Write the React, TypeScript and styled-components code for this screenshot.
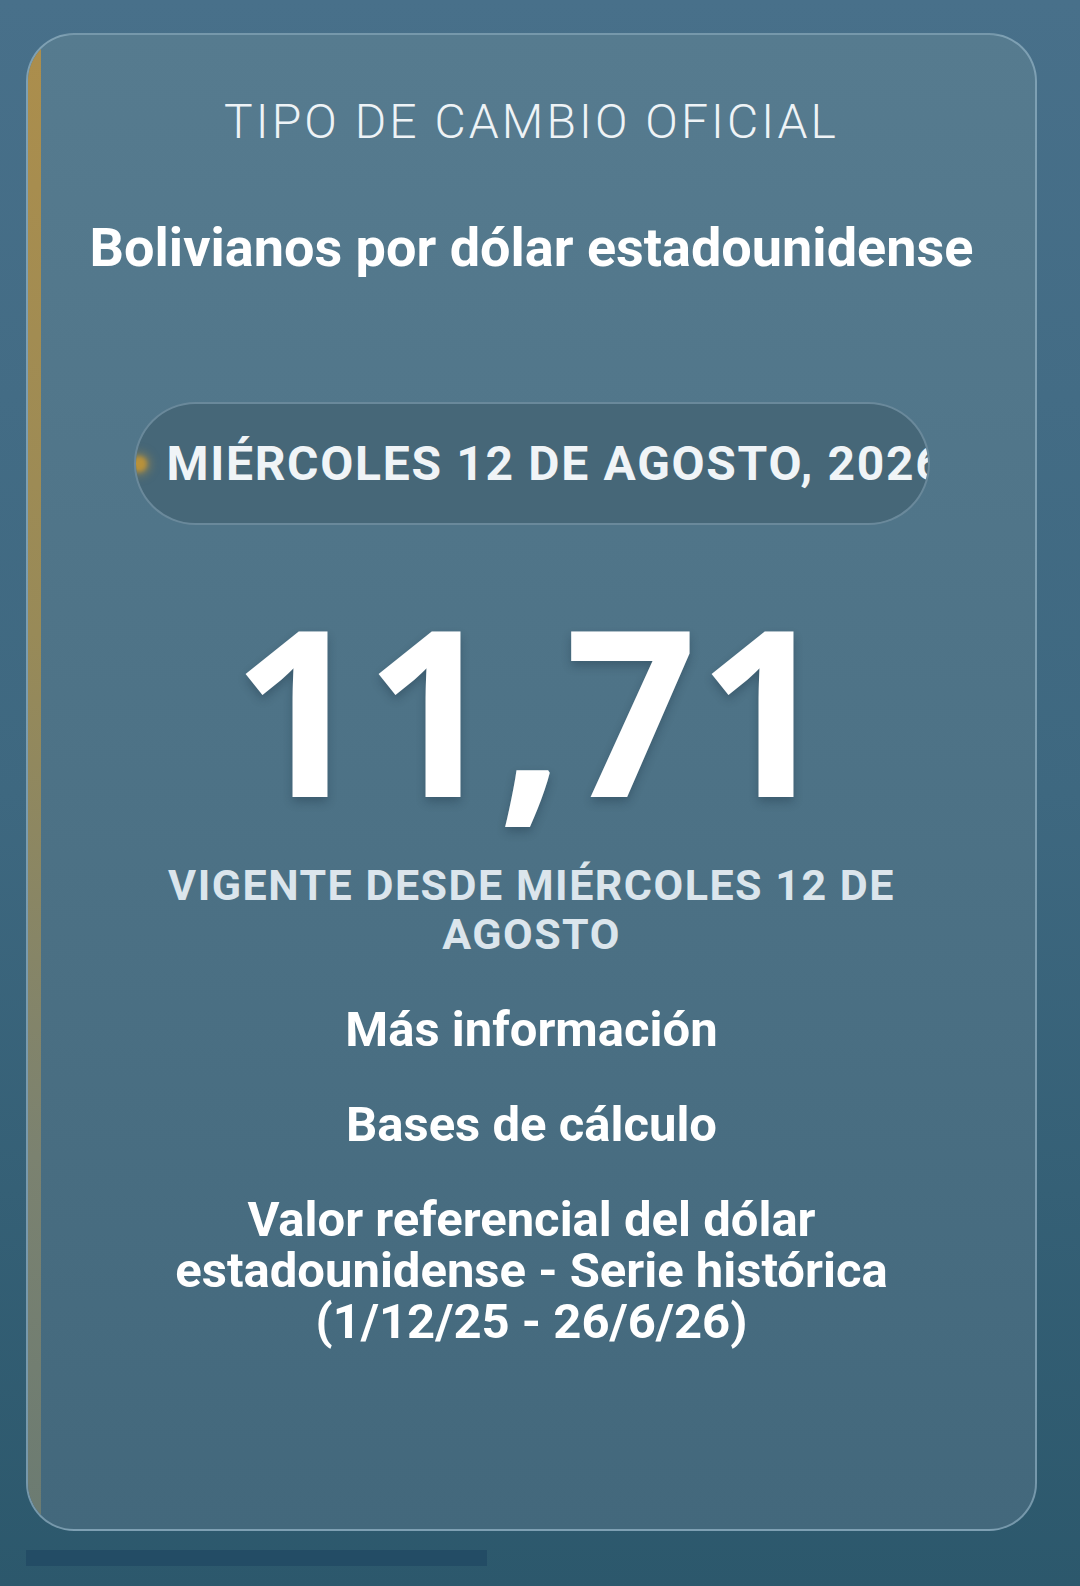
import React from "react";
import styled, { createGlobalStyle } from "styled-components";

const GlobalStyle = createGlobalStyle`
  html, body {
    margin: 0;
    padding: 0;
  }
  body {
    min-height: 1586px;
    background: linear-gradient(180deg, #48708a 0%, #3e6880 50%, #2c586c 100%);
    font-family: Roboto, "Noto Sans", "Liberation Sans", sans-serif;
    -webkit-font-smoothing: antialiased;
  }
  * { box-sizing: border-box; }
`;

const Page = styled.main`
  display: flex;
  flex-direction: column;
  align-items: flex-start;
  padding: 33px 0 0 26px;
`;

const Card = styled.section`
  position: relative;
  width: 1011px;
  display: flex;
  flex-direction: column;
  align-items: center;
  padding: 58px 30px 182px;
  border: 2px solid rgba(160, 192, 210, 0.55);
  border-radius: 48px;
  overflow: hidden;
  background: linear-gradient(180deg, #567b8f 0%, #4c7185 55%, #43687c 100%);

  /* gold accent running down the left edge */
  &::before {
    content: "";
    position: absolute;
    left: 0;
    top: 0;
    bottom: 0;
    width: 13px;
    background: linear-gradient(180deg, #ac8e4c 0%, #988a58 40%, #7b8270 75%, #6b7b72 100%);
  }
`;

const Kicker = styled.h2`
  margin: 0;
  font-weight: 300;
  font-size: 48px;
  line-height: 58px;
  letter-spacing: 3.1px;
  color: #eef3f6;
  text-transform: uppercase;
`;

const Title = styled.h1`
  margin: 68px 0 0;
  font-weight: 700;
  font-size: 54px;
  line-height: 58px;
  white-space: nowrap;
  color: #ffffff;
`;

/* the date chip is narrower than its label, so the year runs past the rounded end */
const DatePill = styled.div`
  margin-top: 125px;
  width: 796px;
  height: 123px;
  flex: none;
  display: flex;
  align-items: center;
  gap: 20px;
  border: 2px solid rgba(150, 180, 198, 0.45);
  border-radius: 62px;
  background: #466778;
  overflow: hidden;
`;

const LiveDot = styled.span`
  flex: none;
  width: 16px;
  height: 16px;
  margin-left: -5px;
  border-radius: 50%;
  background: #b8913a;
  box-shadow: 0 0 8px 3px rgba(196, 152, 58, 0.5);
  filter: blur(2px);
`;

const DateText = styled.span`
  flex: none;
  white-space: nowrap;
  font-weight: 700;
  font-size: 48px;
  letter-spacing: 1.7px;
  color: #f0f4f7;
`;

const Rate = styled.div`
  margin-top: 67px;
  font-family: "Open Sans", "Noto Sans", sans-serif;
  font-weight: 700;
  font-size: 231px;
  line-height: 231px;
  letter-spacing: 1px;
  color: #ffffff;
  text-shadow: 0 5px 10px rgba(20, 40, 55, 0.3);
`;

const Validity = styled.p`
  margin: 38px 0 0;
  max-width: 820px;
  text-align: center;
  font-weight: 700;
  font-size: 43px;
  line-height: 49px;
  letter-spacing: 1.5px;
  color: #dbe5ec;
  text-transform: uppercase;
`;

const LinkList = styled.nav`
  margin-top: 45px;
  display: flex;
  flex-direction: column;
  align-items: center;
  gap: 44px;
`;

const InfoLink = styled.a`
  max-width: 800px;
  text-align: center;
  font-weight: 700;
  font-size: 49px;
  line-height: 51px;
  color: #ffffff;
  text-decoration: none;
`;

const ScrollTrack = styled.div`
  margin-top: 19px;
  width: 461px;
  height: 16px;
  background: #234c65;
`;

export default function App() {
  return (
    <>
      <GlobalStyle />
      <Page>
        <Card>
          <Kicker>Tipo de cambio oficial</Kicker>
          <Title>Bolivianos por dólar estadounidense</Title>
          <DatePill>
            <LiveDot />
            <DateText>MIÉRCOLES 12 DE AGOSTO, 2026</DateText>
          </DatePill>
          <Rate>11,71</Rate>
          <Validity>Vigente desde miércoles 12 de agosto</Validity>
          <LinkList>
            <InfoLink href="#">Más información</InfoLink>
            <InfoLink href="#">Bases de cálculo</InfoLink>
            <InfoLink href="#">
              Valor referencial del dólar estadounidense - Serie histórica (1/12/25 - 26/6/26)
            </InfoLink>
          </LinkList>
        </Card>
        <ScrollTrack />
      </Page>
    </>
  );
}
